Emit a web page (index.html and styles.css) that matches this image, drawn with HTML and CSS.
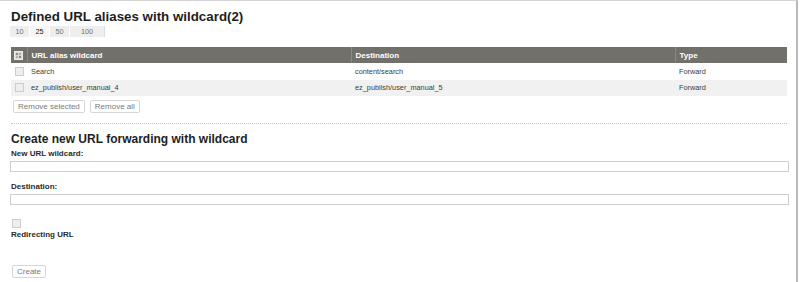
FILE: index.html
```html
<!DOCTYPE html>
<html>
<head>
<meta charset="utf-8">
<link rel="stylesheet" href="styles.css">
</head>
<body>
<div class="frame">
  <h1 class="title">Defined URL aliases with wildcard(2)</h1>
  <div class="pager">
    <span class="pg">10</span><span class="pg cur">25</span><span class="pg">50</span><span class="pg wide">100</span>
  </div>
  <table class="list">
    <thead>
      <tr>
        <th class="c-chk"><span class="toggle"><svg width="9" height="9" viewBox="0 0 9 9"><rect x="0.5" y="0.5" width="8" height="8" fill="#d8d8d6" stroke="#efefed"/><rect x="2" y="2" width="2" height="2" fill="#8e8c88"/><rect x="5" y="2" width="2" height="2" fill="#b5b3af"/><rect x="2" y="5" width="2" height="2" fill="#b5b3af"/><rect x="5" y="5" width="2" height="2" fill="#8e8c88"/></svg></span></th>
        <th class="c-name">URL alias wildcard</th>
        <th class="c-dest">Destination</th>
        <th class="c-type">Type</th>
      </tr>
    </thead>
    <tbody>
      <tr class="odd">
        <td class="c-chk"><span class="box"></span></td>
        <td>Search</td>
        <td>content/search</td>
        <td>Forward</td>
      </tr>
      <tr class="even">
        <td class="c-chk"><span class="box"></span></td>
        <td>ez_publish/user_manual_4</td>
        <td>ez_publish/user_manual_5</td>
        <td>Forward</td>
      </tr>
    </tbody>
  </table>
  <div class="actions">
    <button class="btn">Remove selected</button><button class="btn">Remove all</button>
  </div>
  <div class="sep"></div>
  <h2 class="subtitle">Create new URL forwarding with wildcard</h2>
  <label class="lbl">New URL wildcard:</label>
  <div class="field"></div>
  <label class="lbl lbl-2">Destination:</label>
  <div class="field"></div>
  <span class="box box-form"></span>
  <label class="lbl lbl-3">Redirecting URL</label>
  <button class="btn btn-create">Create</button>
</div>
</body>
</html>
```
FILE: styles.css
```css
html, body {
  margin: 0;
  padding: 0;
  background: #ffffff;
}
body {
  font-family: "Liberation Sans", Arial, sans-serif;
  color: #3a3a3a;
}
.frame {
  width: 776px;
  height: 281px;
  border-top: 1px solid #d4d4d4;
  border-right: 2px solid #b9b9b9;
  padding: 0 10px 0 10px;
  box-sizing: content-box;
  overflow: hidden;
}
.title {
  margin: 8px 0 0 1px;
  font-size: 13.33px;
  line-height: 15px;
  font-weight: bold;
  color: #1e1e1e;
}
.pager {
  display: flex;
  margin-top: 2px;
  height: 11px;
}
.pg {
  display: flex;
  align-items: center;
  justify-content: center;
  width: 19px;
  height: 11px;
  background: #eeeeee;
  border-right: 1px solid #ffffff;
  font-size: 7.3px;
  color: #707070;
}
.pg.cur {
  background: #f6f6f6;
  color: #222222;
}
.pg.wide {
  width: 34px;
  border-right: 1px solid #dddddd;
}
.list {
  margin: 10px 0 0 1px;
  width: 776px;
  border-collapse: collapse;
  table-layout: fixed;
}
.list th, .list td {
  box-sizing: border-box;
}
.list th {
  background: #72706b;
  color: #ffffff;
  font-size: 8px;
  font-weight: bold;
  text-align: left;
  height: 16px;
  padding: 0 0 0 4px;
  border-left: 1px solid #8b8984;
}
.list th.c-chk {
  border-left: none;
}
.list .c-chk {
  width: 16px;
  padding: 0 0 0 3px;
}
.c-name { width: 324px; }
.c-dest { width: 324px; }
.list td {
  font-size: 7.33px;
  height: 16.5px;
  padding: 0 0 0 4px;
  color: #3c3c3c;
}
.list td.c-chk {
  padding-left: 4px;
}
.list tr.even td {
  background: #f1f1f1;
}
.toggle {
  display: block;
  width: 9px;
  height: 9px;
}
.toggle svg { display: block; }
.box {
  display: block;
  width: 7px;
  height: 7px;
  border: 1px solid #cdcdcd;
  background: #eeeeee;
}
.actions {
  display: flex;
  gap: 5px;
  margin: 4px 0 0 3px;
}
.btn {
  font-family: "Liberation Sans", Arial, sans-serif;
  font-size: 8px;
  color: #7a7a7a;
  background: #ffffff;
  border: 1px solid #d6d6d6;
  border-radius: 2px;
  height: 13px;
  padding: 0 4px;
  margin: 0;
  line-height: 11px;
}
.sep {
  margin: 10px 0 0 1px;
  border-top: 1px dotted #c4c4c4;
  width: 776px;
}
.subtitle {
  margin: 8px 0 0 1px;
  font-size: 12px;
  line-height: 14px;
  font-weight: bold;
  color: #1e1e1e;
}
.lbl {
  display: block;
  margin: 3px 0 0 1px;
  font-size: 8px;
  line-height: 10px;
  font-weight: bold;
  color: #2a2a2a;
}
.lbl-2 { margin-top: 10px; }
.lbl-3 { margin-top: 2px; }
.field {
  margin-top: 2px;
  width: 779px;
  height: 11px;
  border: 1px solid #cfcfcf;
  box-sizing: border-box;
  background: #ffffff;
}
.box-form {
  margin: 14px 0 0 2px;
}
.btn-create {
  display: block;
  margin: 25px 0 0 2px;
  padding: 0 4px;
}
```
